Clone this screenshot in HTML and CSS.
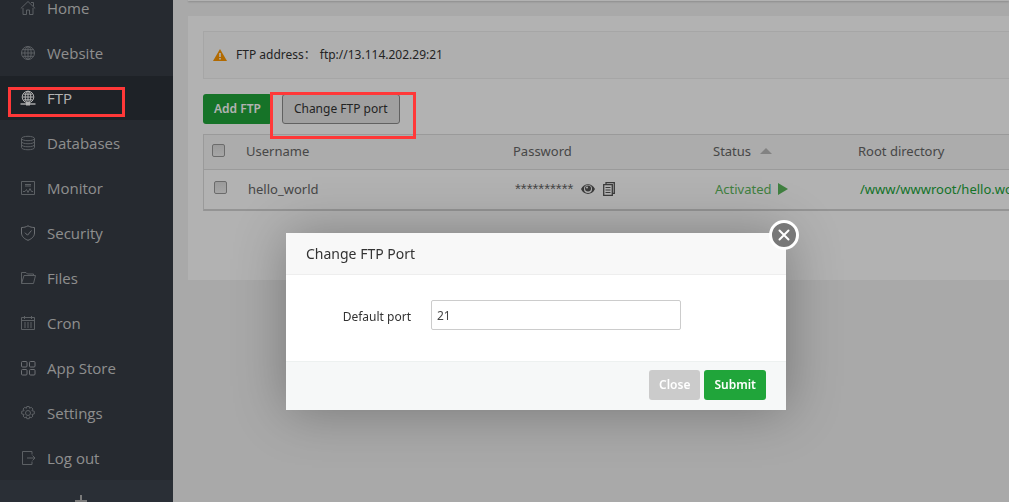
FILE: index.html
```html
<!DOCTYPE html>
<html lang="en">
<head>
<meta charset="utf-8">
<title>FTP</title>
<link rel="stylesheet" href="styles.css">
</head>
<body>
<div class="app">
  <nav class="sidebar">
    <ul class="menu">
      <li><a class="menu-link" href="#home"><svg class="icon" viewBox="0 0 16 16"><path d="M.8 8.500 8 1.500l7.200 7M3 8v6.500h3.500V10h3v4.500H13V8M11 2.500h2.500v4"/></svg>Home</a></li>
      <li><a class="menu-link" href="#website"><svg class="icon" viewBox="0 0 16 16"><circle cx="8" cy="8" r="6.500"/><ellipse cx="8" cy="8" rx="3.200" ry="6.500"/><path d="M8 1.500v13M1.500 8h13M2.500 4.700h11M2.500 11.300h11"/></svg>Website</a></li>
      <li><a class="menu-link active" href="#ftp"><svg class="icon" viewBox="0 0 16 16"><circle cx="8" cy="7" r="5.800"/><ellipse cx="8" cy="7" rx="2.800" ry="5.800"/><path d="M8 1v13M2.500 7h11M3.500 4.200h9M3.500 9.800h9"/><path d="M.5 14h15" stroke-width="1.400"/><path d="M6 14h4" stroke-width="3"/></svg>FTP</a></li>
      <li><a class="menu-link" href="#databases"><svg class="icon" viewBox="0 0 16 16"><ellipse cx="8" cy="3.500" rx="6.500" ry="2.200"/><path d="M1.500 3.500v9c0 3 13 3 13 0v-9M1.500 6.500c0 3 13 3 13 0M1.500 9.500c0 3 13 3 13 0"/></svg>Databases</a></li>
      <li><a class="menu-link" href="#monitor"><svg class="icon" viewBox="0 0 16 16"><path d="M1.500 1.500h13v13h-13zM5 4.500h6M5 6h6M3 11.500h2l1.500-2 1.500 3 2-4 1.500 3H13"/></svg>Monitor</a></li>
      <li><a class="menu-link" href="#security"><svg class="icon bright" viewBox="0 0 16 16"><path d="M8 .8c2 1.200 4 1.700 6.500 1.700V8c0 3.500-3 6-6.500 7.300C4.500 14 1.500 11.500 1.500 8V2.500C4 2.500 6 2 8 .8zM5 7.700l2.500 2.500 4-4.700"/></svg>Security</a></li>
      <li><a class="menu-link" href="#files"><svg class="icon" viewBox="0 0 16 16"><path d="M1.500 13.500v-11H6L7.500 4h6v1.500M1.500 13.500l2.500-8h11.500l-2 8z"/></svg>Files</a></li>
      <li><a class="menu-link" href="#cron"><svg class="icon" viewBox="0 0 16 16"><path d="M1.500 2.500h13v12h-13zM1.500 5.500h13M4.500 1v3M11.500 1v3M4 8h2M7 8h2M10 8h2M4 10h2M7 10h2M10 10h2M4 12h2M7 12h2M10 12h2"/></svg>Cron</a></li>
      <li><a class="menu-link" href="#store"><svg class="icon bright" viewBox="0 0 16 16"><rect x="1.500" y="1.500" width="5.500" height="5.500" rx="1"/><rect x="9.500" y="1.500" width="5.500" height="5.500" rx="1"/><rect x="1.500" y="9.500" width="5.500" height="5.500" rx="1"/><rect x="9.500" y="9.500" width="5.500" height="5.500" rx="1"/></svg>App Store</a></li>
      <li><a class="menu-link" href="#settings"><svg class="icon" viewBox="0 0 16 16"><circle cx="8" cy="8" r="2.500"/><path d="M6.800 1.500h2.400l.4 1.800 1.600-1 1.800 1.700-1.100 1.600 2.400.7v2.600l-2.400.6 1 1.600-1.700 1.700-1.600-1-.4 1.900H6.800l-.4-1.900-1.600 1-1.700-1.700 1-1.600-2.400-.6V6.300l2.400-.7L3 4l1.800-1.700 1.600 1z"/></svg>Settings</a></li>
      <li><a class="menu-link" href="#logout"><svg class="icon" viewBox="0 0 16 16"><path d="M12 4.500v-3H2.500v13H12v-3M7 8h8M12.500 5.500 15 8l-2.500 2.500"/></svg>Log out</a></li>
    </ul>
    <button class="menu-add" type="button" aria-label="Add menu item"><svg class="plus" viewBox="0 0 14 14"><path d="M7 1v12M1 7h12"/></svg></button>
  </nav>
  <main class="content">
    <div class="topbar"></div>
    <section class="panel">
      <div class="notice">
        <svg class="warn" viewBox="0 0 14 12"><path d="M7 0l7 12H0z" fill="#f90"/><path d="M7 4v4M7 9v1.500" stroke="#fff" stroke-width="1.600"/></svg>
        <span class="notice-label">FTP address：</span><span>ftp://13.114.202.29:21</span>
      </div>
      <div class="toolbar">
        <button class="btn btn-green" type="button">Add FTP</button>
        <button class="btn btn-plain" type="button">Change FTP port</button>
      </div>
      <table class="list">
        <colgroup><col class="c-check"><col class="c-user"><col class="c-pass"><col class="c-status"><col></colgroup>
        <thead>
          <tr><th><input class="tick" type="checkbox" aria-label="Select all"></th><th>Username</th><th>Password</th><th>Status<svg class="sort" viewBox="0 0 12 6"><path d="M0 6 6 0l6 6z"/></svg></th><th>Root directory</th></tr>
        </thead>
        <tbody>
          <tr><td><input class="tick" type="checkbox" aria-label="Select hello_world"></td><td>hello_world</td>
          <td><span class="cell"><span class="stars">**********</span>
            <svg class="eye" viewBox="0 0 14 12"><path d="M0 6c3-6.500 11-6.500 14 0-3 6.500-11 6.500-14 0z"/><circle cx="7" cy="6" r="4" fill="#fff"/><circle cx="7" cy="5.500" r="3"/><circle cx="6" cy="4.500" r="1" fill="#fff"/></svg>
            <svg class="copy" viewBox="0 0 12 14"><path d="M3 2.500V.7h8.300v10.600H9.500M.7 2.700h8.600v10.600H.7z"/><path d="M2.500 5.500h5M2.500 8h5M2.500 10.500h5" stroke-width="1"/></svg></span></td>
          <td><a class="status" href="#status">Activated<svg class="play" viewBox="0 0 10 12"><path d="M0 0l10 6-10 6z"/></svg></a></td><td><a class="path" href="#path">/www/wwwroot/hello.world</a></td></tr>
        </tbody>
      </table>
    </section>
  </main>
</div>
<div class="shade"></div>
<div class="mark mark-menu"></div>
<div class="mark mark-button"></div>
<form class="dialog" role="dialog" aria-labelledby="dialog-title">
  <h2 class="dialog-title" id="dialog-title">Change FTP Port</h2>
  <button class="dialog-x" type="button" aria-label="Close dialog"><svg class="cross" viewBox="0 0 12 12"><path d="M1.500 1.500l9 9M10.500 1.500l-9 9"/></svg></button>
  <div class="dialog-body">
    <label class="label" for="port">Default port</label>
    <input class="port" id="port" type="text" value="21">
  </div>
  <div class="dialog-foot">
    <button class="btn btn-grey" type="button">Close</button>
    <button class="btn btn-green" type="submit">Submit</button>
  </div>
</form>
</body>
</html>
```
FILE: styles.css
```css
* { box-sizing: border-box; }
html, body { height: 100%; }
body {
  margin: 0;
  overflow: hidden;
  background: #f3f3f3;
  color: #333;
  font: 13px/20px "Noto Sans", "Noto Sans CJK SC", sans-serif;
}
button, input { font: inherit; }
a { text-decoration: none; }
svg { flex: none; }

.app { display: flex; height: 100%; }
.sidebar { flex: 0 0 173px; overflow: hidden; background: #373d46; }
.menu { display: grid; gap: 1px; list-style: none; margin: -14px 0 0; padding: 0; }
.menu-link {
  display: flex;
  align-items: center;
  gap: 11px;
  height: 44px;
  padding-left: 20px;
  color: #ccc;
  font: 15px/20px "Open Sans", sans-serif;
}
.menu-link.active { background: #2c3138; color: #fff; }
.icon { width: 16px; height: 16px; fill: none; stroke: #858a90; stroke-width: 1; }
.icon.bright { stroke: #9da1a6; }
.active .icon { stroke: #fff; }
.menu-add {
  display: flex;
  justify-content: center;
  width: 100%;
  height: 45px;
  padding: 14px 12px 0 0;
  border: 0;
  background: #3d444e;
}
.plus { width: 14px; height: 14px; fill: none; stroke: #b0b0b0; stroke-width: 2; }

.content { flex: 1; min-width: 0; padding-left: 15px; }
.topbar { height: 1px; margin-bottom: 15px; background: #fff; box-shadow: 0 1px 2px rgba(0, 0, 0, .25); }
.panel { height: 264px; padding: 15px 0 0 15px; background: #fff; overflow: hidden; }
.notice {
  display: flex;
  align-items: center;
  height: 48px;
  padding-left: 9px;
  border: 1px solid #eee;
  border-right: 0;
  background: #fbfbfb;
  font: 12px/20px "Noto Sans", "Noto Sans CJK SC", sans-serif;
}
.warn { width: 14px; height: 12px; margin-right: 9px; }
.notice-label { margin-right: 4px; }
.toolbar { display: flex; gap: 10px; padding: 15px 0 10px; }
.btn {
  height: 30px;
  padding: 0 9px;
  border: 1px solid transparent;
  border-radius: 3px;
  font-size: 12px;
  font-weight: 600;
  line-height: 20px;
  white-space: nowrap;
}
.btn-green { background: #20a53a; color: #fff; }
.btn-plain { padding: 0 11px; background: #e6e6e6; border-color: #8c8c8c; color: #333; font-weight: 400; }
.btn-grey { background: #cbcbcb; color: #fff; }
.toolbar .btn-green { padding: 0 10px; }

.list {
  width: 1000px;
  table-layout: fixed;
  border-collapse: separate;
  border-spacing: 0;
  border: 1px solid #ddd;
  border-bottom: 2px solid #d5d5d5;
  color: #666;
}
.c-check { width: 34px; }
.c-user { width: 267px; }
.c-pass { width: 200px; }
.c-status { width: 145px; }
.list th { height: 35px; padding: 0 8px 2px; background: #f6f6f6; border-bottom: 1px solid #ddd; font-weight: 400; text-align: left; }
.list td { height: 39px; padding: 0 10px 2px; }
.tick {
  appearance: none;
  display: block;
  width: 13px;
  height: 13px;
  margin: 0 0 2px;
  border: 1px solid #9a9a9a;
  border-radius: 2px;
  background: linear-gradient(#dedede, #eee);
}
.sort { width: 12px; height: 6px; margin: 0 0 2px 9px; fill: #bbb; }
.cell { display: flex; align-items: center; }
.stars { padding-right: 8px; font-family: "Liberation Sans", sans-serif; font-size: 15px; }
.eye { width: 14px; height: 12px; margin-right: 8px; fill: #555; }
.copy { width: 12px; height: 14px; fill: none; stroke: #555; stroke-width: 1.300; }
.status { display: flex; align-items: center; gap: 6px; color: #5cb85c; }
.play { width: 10px; height: 12px; fill: #5cb85c; }
.path { color: #20a53a; }

.shade { position: fixed; inset: 0; background: #000; opacity: .3; }
.mark { position: absolute; border: 3px solid #ff3838; }
.mark-menu { left: 8px; top: 87px; width: 117px; height: 30px; }
.mark-button { left: 270px; top: 92px; width: 146px; height: 47px; }

.dialog {
  position: absolute;
  left: 286px;
  top: 233px;
  width: 500px;
  background: #fff;
  box-shadow: 1px 1px 50px rgba(0, 0, 0, .3);
}
.dialog-title {
  height: 42px;
  margin: 0;
  padding: 0 20px;
  border-bottom: 1px solid #eee;
  background: #f8f8f8;
  font-size: 14px;
  font-weight: 400;
  line-height: 41px;
}
.dialog-x {
  position: absolute;
  top: -13px;
  right: -13px;
  display: flex;
  align-items: center;
  justify-content: center;
  width: 30px;
  height: 30px;
  padding: 0;
  border: 3px solid #fff;
  border-radius: 50%;
  background: #787878;
}
.cross { width: 12px; height: 12px; fill: none; stroke: #fff; stroke-width: 2; stroke-linecap: round; }
.dialog-body { display: flex; align-items: center; gap: 20px; padding: 25px 0 31px; }
.label { width: 125px; padding-top: 3px; text-align: right; font-size: 12px; }
.port { width: 250px; height: 30px; padding: 0 5px; border: 1px solid #ccc; border-radius: 2px; color: #444; font-size: 12px; }
.dialog-foot {
  display: flex;
  justify-content: flex-end;
  gap: 4px;
  padding: 8px 20px 10px;
  border-top: 1px solid #edf1f0;
  background: #f6f8f8;
}
```
